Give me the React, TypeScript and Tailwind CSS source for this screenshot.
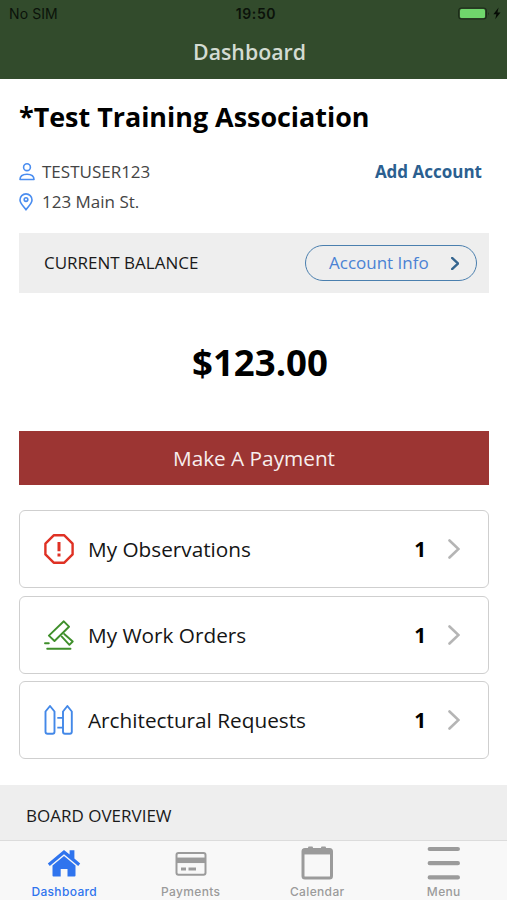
import type { ReactNode } from 'react';

function StatusBar() {
  return (
    <div className="grid h-[27px] grid-cols-3 items-center pl-[9px] pr-[5px] font-['Inter',sans-serif] text-[14px] text-[#0b120a]">
      <span className="tracking-[0.1px]">No SIM</span>
      <span className="pl-px text-center font-semibold tracking-[0.6px]">19:50</span>
      <svg className="justify-self-end" width="45" height="14" viewBox="0 0 45 14">
        <rect x="1.6" y="1" width="27.8" height="11" rx="3" fill="none" stroke="#1c2c19" strokeWidth="1.1" />
        <rect x="3" y="2" width="25" height="9" rx="1.5" fill="#70d76c" />
        <path d="M31 5q1.6 1.6 0 3.4z" fill="#1c2c19" />
        <path d="M41.6.6 36.400 7.200h3L38.200 12.200l5.300-6.800h-3.100z" fill="#060b05" />
      </svg>
    </div>
  );
}

function UserIcon() {
  return (
    <svg width="16" height="19" viewBox="0 0 16 19" fill="none" stroke="#4a8df0" strokeWidth="1.6">
      <circle cx="8" cy="4.2" r="3.4" />
      <path d="M1 16.500c0-3.600 2.600-5.300 7-5.300s7 1.700 7 5.300z" strokeLinejoin="round" />
    </svg>
  );
}

function PinIcon() {
  return (
    <svg width="14" height="18" viewBox="0 0 14 18" fill="none" stroke="#4a8df0" strokeWidth="1.6" strokeLinejoin="round">
      <path d="M7 16.800C4 12.700 1 9.900 1 6.900a6 6 0 0 1 12 0c0 3-3 5.800-6 9.900z" />
      <circle cx="7" cy="6.600" r="1.800" />
    </svg>
  );
}

function AlertIcon() {
  return (
    <svg width="30" height="30" viewBox="0 0 30 30" fill="none" stroke="#df3124" strokeWidth="2.4" strokeLinejoin="round">
      <path d="M9.700 1.300h10.600l8.300 8.300v10.800l-8.300 8.300H9.700l-8.300-8.300V9.600z" />
      <path d="M15 8v9.300M15 19.600v2.800" strokeWidth="3" />
    </svg>
  );
}

function GavelIcon() {
  return (
    <svg width="30" height="30" viewBox="0 0 30 30" fill="none" stroke="#3f8f2b" strokeWidth="1.9" strokeLinejoin="round" strokeLinecap="round">
      <path d="M19.800 1.300 25 6.700 10.500 21 4.900 15.600z" />
      <path d="m17.800 16.600 7.600 8.200 3.300-3.300-8.500-7.500" />
      <path d="M1 23.300h3.800M3.200 28.700h23.300" />
    </svg>
  );
}

function FenceIcon() {
  return (
    <svg width="30" height="30" viewBox="0 0 30 30" fill="none" stroke="#4388e8" strokeWidth="1.9" strokeLinejoin="round">
      <path d="M1.500 6.500 6 1l4.500 5.500v20.300q0 2-2 2h-5q-2 0-2-2z" />
      <path d="M19 6.500 23.400 1l4.400 5.500v20.300q0 2-2 2H21q-2 0-2-2z" />
      <path d="M13.300 12.900H19M13.300 22.600H19" />
    </svg>
  );
}

function Chevron({ className }: { className: string }) {
  return (
    <svg className={className} viewBox="0 0 12 20" fill="none" stroke="currentColor" strokeLinecap="round">
      <path d="m1.500 1.500 9 8.500-9 8.500" vectorEffect="non-scaling-stroke" />
    </svg>
  );
}

const rows: { label: string; count: number; icon: ReactNode }[] = [
  { label: 'My Observations', count: 1, icon: <AlertIcon /> },
  { label: 'My Work Orders', count: 1, icon: <GavelIcon /> },
  { label: 'Architectural Requests', count: 1, icon: <FenceIcon /> },
];

const tabs: { label: string; active?: boolean; icon: ReactNode }[] = [
  {
    label: 'Dashboard',
    active: true,
    icon: (
      <svg width="34" height="34" viewBox="0 0 34 34" fill="currentColor">
        <path d="M.8 17.500 17 4l5.600 4.500V4.300h4.800v8.300l5.800 4.900-2 2.500L17 8.200 2.800 20z" />
        <path d="M5.500 19.600 17 10l11.500 9.600v9.900q0 1-1 1h-7v-7.600h-6.800v7.600h-7.200q-1 0-1-1z" />
      </svg>
    ),
  },
  {
    label: 'Payments',
    icon: (
      <svg width="34" height="34" viewBox="0 0 34 34" fill="none" stroke="currentColor" strokeWidth="2">
        <rect x="2.500" y="7" width="29" height="21.800" rx="2" />
        <path d="M2.500 14.300h29" strokeWidth="5.500" />
        <path d="M7 23h5M14.500 23h7.500" strokeWidth="3" />
      </svg>
    ),
  },
  {
    label: 'Calendar',
    icon: (
      <svg width="34" height="34" viewBox="0 0 34 34" fill="none" stroke="currentColor">
        <rect x="3" y="3.500" width="28.500" height="28.500" rx="2" strokeWidth="3" />
        <path d="M2.500 5.700H32" strokeWidth="5.500" />
        <path d="M9 1.600h3M22 1.600h3" strokeWidth="2" strokeLinecap="round" />
      </svg>
    ),
  },
  {
    label: 'Menu',
    icon: (
      <svg width="34" height="34" viewBox="0 0 34 34" stroke="currentColor" strokeWidth="4.2" strokeLinecap="round">
        <path d="M2.700 3h28.200M2.700 17.200h28.200M2.700 31.400h28.200" />
      </svg>
    ),
  },
];

export default function App() {
  return (
    <div className="flex h-[900px] w-[507px] flex-col overflow-hidden bg-white font-['Open_Sans',sans-serif] text-black">
      <header className="h-[79px] shrink-0 bg-[#324b2c]">
        <StatusBar />
        <h1 className="pr-[8px] pt-[11px] text-center text-[21.3px] font-semibold leading-7 text-[#d3dbd2]">Dashboard</h1>
      </header>

      <main className="flex flex-1 flex-col pl-[19px] pr-[18px]">
        <h2 className="mt-[20px] text-[26.9px] font-bold leading-9 whitespace-nowrap">*Test Training Association</h2>

        <div className="mt-[22px] flex items-start justify-between pr-[7px] text-[17px] leading-[30px] text-[#444]">
          <div>
            <div className="flex items-center">
              <span className="w-[23px]"><UserIcon /></span>
              TESTUSER123
            </div>
            <div className="flex items-center">
              <span className="w-[23px]"><PinIcon /></span>
              123 Main St.
            </div>
          </div>
          <a className="font-bold text-[#2b5f90]">Add Account</a>
        </div>

        <div className="mt-4 flex h-[60px] items-center justify-between bg-[#eee] pl-[25px] pr-3">
          <span className="text-[17px] text-[#1a1a1a]">CURRENT BALANCE</span>
          <button className="flex h-9 w-[172px] items-center justify-between rounded-full border-[1.5px] border-[#4a7fae] pl-[23px] pr-[17px] text-[17px] text-[#4a82d4]">
            Account Info
            <Chevron className="mt-px h-[13px] w-[8px] stroke-[2.4px] text-[#35658f]" />
          </button>
        </div>

        <div className="mt-[42px] pl-3 text-center text-[36.6px] font-bold leading-[54px]">$123.00</div>

        <button className="mt-[42px] h-[54px] shrink-0 bg-[#9c3533] pt-0.5 text-[20.75px] text-[#f7eeee]">Make A Payment</button>

        <ul className="mt-[25px] flex flex-col gap-[7.5px]">
          {rows.map((row) => (
            <li key={row.label} className="flex h-[78px] items-center rounded-md border border-[#cfcfcf] pl-6 pr-7 text-[20.75px]">
              <span className="w-[44px] shrink-0">{row.icon}</span>
              <span className="flex-1 whitespace-nowrap pt-0.5 text-[#151515]">{row.label}</span>
              <span className="mr-[22px] pt-0.5 font-bold">{row.count}</span>
              <Chevron className="h-5 w-3 stroke-[2.6px] text-[#b5b5b5]" />
            </li>
          ))}
        </ul>
      </main>

      <section className="flex h-[55px] shrink-0 items-center bg-[#eee] pl-[26px] pt-1.5 text-[17px] text-[#1a1a1a]">
        BOARD OVERVIEW
      </section>

      <nav className="grid h-[60px] shrink-0 grid-cols-4 border-t border-[#dcdcdc] bg-[#f8f8f8] pl-px font-['Inter',sans-serif]">
        {tabs.map((tab) => (
          <a
            key={tab.label}
            className={`flex flex-col items-center pt-[5px] text-[12px] font-medium tracking-[0.35px] ${tab.active ? 'text-[#2f74ee]' : 'text-[#9b9b9b]'}`}
          >
            {tab.icon}
            <span className="mt-0.5 leading-5">{tab.label}</span>
          </a>
        ))}
      </nav>
    </div>
  );
}
